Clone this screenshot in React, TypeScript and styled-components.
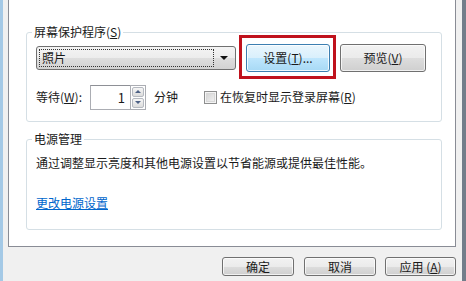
import React from "react";
import styled, { createGlobalStyle, css } from "styled-components";

const GlobalStyle = createGlobalStyle`
  html, body {
    margin: 0;
    padding: 0;
    background: #f0f0f0;
  }
  body {
    font-family: "Noto Sans CJK SC", "Microsoft YaHei", sans-serif;
    font-size: 12px;
    color: #1a1a1a;
  }
  * {
    box-sizing: border-box;
  }
`;

const Window = styled.div`
  width: 466px;
  height: 281px;
  overflow: hidden;
  display: flex;
  flex-direction: column;
  background: #f0f0f0;
  border-left: 3px solid #a4c9e6;
  border-right: 4px solid #727d8a;
  padding: 0 6px 0 5px;
`;

const TabPanel = styled.div`
  height: 247px;
  flex-shrink: 0;
  background: #ffffff;
  border: 1px solid #898c95;
  border-top: none;
  padding: 24px 13px 0 17px;
  display: flex;
  flex-direction: column;
`;

const Group = styled.fieldset<{ $pad: string; $top?: number }>`
  margin: ${(p) => p.$top ?? 0}px 0 0 0;
  padding: ${(p) => p.$pad};
  border: 1px solid #d5dfe5;
  border-radius: 3px;
  min-width: 0;
`;

const Legend = styled.legend`
  margin-left: -4px;
  padding: 0 2px;
  line-height: 16px;
  color: #1a1a1a;
`;

const Row = styled.div<{ $top?: number; $h: number }>`
  display: flex;
  align-items: center;
  height: ${(p) => p.$h}px;
  margin-top: ${(p) => p.$top ?? 0}px;
`;

const ComboBox = styled.div`
  width: 200px;
  height: 24px;
  display: flex;
  align-items: stretch;
  padding: 2px;
  border: 1px solid #707070;
  border-radius: 3px;
  background: linear-gradient(#f4f4f4 0%, #ececec 50%, #dedede 51%, #d2d2d2 100%);
`;

const FocusRect = styled.div`
  flex: 1;
  display: flex;
  align-items: center;
  padding-left: 2px;
  border: 1px dotted #333;
  line-height: 16px;
`;

const ArrowCell = styled.div`
  width: 19px;
  display: flex;
  align-items: center;
  justify-content: center;
`;

const DownTriangle = styled.span`
  width: 0;
  height: 0;
  border-left: 4px solid transparent;
  border-right: 4px solid transparent;
  border-top: 4px solid #111;
`;

const Marked = styled.div`
  position: relative;
  margin-left: 10px;
  display: flex;

  &::after {
    content: "";
    position: absolute;
    top: -9px;
    bottom: -7px;
    left: -7px;
    right: -6px;
    border: 3px solid #c0121d;
    pointer-events: none;
  }
`;

const Button = styled.button<{ $w: number; $h: number; $focus?: boolean; $gap?: number }>`
  width: ${(p) => p.$w}px;
  height: ${(p) => p.$h}px;
  margin-left: ${(p) => p.$gap ?? 0}px;
  padding: 0;
  font: inherit;
  color: #1a1a1a;
  border: 1px solid #707070;
  border-radius: 3px;
  background: linear-gradient(#f2f2f2 0%, #ebebeb 50%, #dddddd 51%, #cfcfcf 100%);
  box-shadow: inset 0 0 0 1px rgba(255, 255, 255, 0.7);
  line-height: 16px;
  ${(p) =>
    p.$focus &&
    css`
      border-color: #3c7fb1;
      background: linear-gradient(#eaf6fd 0%, #d9f0fc 50%, #bee6fd 51%, #a7d9f5 100%);
      box-shadow: inset 0 0 0 1px rgba(255, 255, 255, 0.8);
    `}
`;

const Label = styled.span<{ $gap?: number }>`
  margin-left: ${(p) => p.$gap ?? 0}px;
  line-height: 16px;
  white-space: nowrap;
`;

const SpinBox = styled.div`
  margin-left: 8px;
  display: flex;
  height: 25px;
`;

const SpinInput = styled.div`
  width: 40px;
  height: 25px;
  display: flex;
  align-items: center;
  justify-content: flex-end;
  padding-right: 5px;
  background: #fff;
  border: 1px solid #abadb3;
  border-top-color: #8e9096;
  border-right: none;
  font-size: 13px;
`;

const SpinButtons = styled.div`
  width: 16px;
  display: flex;
  flex-direction: column;
  border: 1px solid #abadb3;
  background: #fff;
  padding: 1px;
  gap: 1px;
`;

const SpinButton = styled.div`
  flex: 1;
  display: flex;
  align-items: center;
  justify-content: center;
  border: 1px solid #b5b9c0;
  border-radius: 2px;
  background: linear-gradient(#f6f6f6, #dcdcdc);
`;

const Tri = styled.span<{ $up?: boolean }>`
  width: 0;
  height: 0;
  border-left: 3px solid transparent;
  border-right: 3px solid transparent;
  ${(p) =>
    p.$up
      ? css`
          border-bottom: 3px solid #4d6185;
        `
      : css`
          border-top: 3px solid #4d6185;
        `}
`;

const CheckBox = styled.span`
  margin-left: 26px;
  width: 13px;
  height: 13px;
  border: 1px solid #8e8f8f;
  background: linear-gradient(135deg, #cfcfcf, #f6f6f6);
  box-shadow: inset 0 0 0 1px #f4f4f4, inset 0 0 0 2px #d8d8d8;
  flex-shrink: 0;
`;

const Paragraph = styled.div`
  line-height: 16px;
  white-space: nowrap;
`;

const Link = styled.a`
  display: block;
  margin-top: 24px;
  line-height: 16px;
  color: #0066cc;
  text-decoration: underline;
  width: max-content;
`;

const ButtonBar = styled.div`
  display: flex;
  justify-content: flex-end;
  margin-top: 10px;
`;

export default function App() {
  return (
    <>
      <GlobalStyle />
      <Window>
        <TabPanel>
          <Group $pad="4px 8px 11px 9px">
            <Legend>
              屏幕保护程序(<u>S</u>)
            </Legend>
            <Row $h={28}>
              <ComboBox>
                <FocusRect>照片</FocusRect>
                <ArrowCell>
                  <DownTriangle />
                </ArrowCell>
              </ComboBox>
              <Marked>
                <Button $w={84} $h={28} $focus>
                  设置(<u>T</u>)...
                </Button>
              </Marked>
              <Button $w={86} $h={28} $gap={10}>
                预览(<u>V</u>)
              </Button>
            </Row>
            <Row $h={26} $top={12}>
              <Label>
                等待(<u>W</u>):
              </Label>
              <SpinBox>
                <SpinInput>1</SpinInput>
                <SpinButtons>
                  <SpinButton>
                    <Tri $up />
                  </SpinButton>
                  <SpinButton>
                    <Tri />
                  </SpinButton>
                </SpinButtons>
              </SpinBox>
              <Label $gap={8}>分钟</Label>
              <CheckBox />
              <Label $gap={3}>
                在恢复时显示登录屏幕(<u>R</u>)
              </Label>
            </Row>
          </Group>
          <Group $pad="8px 9px 18px 9px" $top={9}>
            <Legend>电源管理</Legend>
            <Paragraph>通过调整显示亮度和其他电源设置以节省能源或提供最佳性能。</Paragraph>
            <Link href="#">更改电源设置</Link>
          </Group>
        </TabPanel>
        <ButtonBar>
          <Button $w={72} $h={19}>确定</Button>
          <Button $w={72} $h={19} $gap={10}>取消</Button>
          <Button $w={71} $h={19} $gap={9}>
            应用 (<u>A</u>)
          </Button>
        </ButtonBar>
      </Window>
    </>
  );
}
